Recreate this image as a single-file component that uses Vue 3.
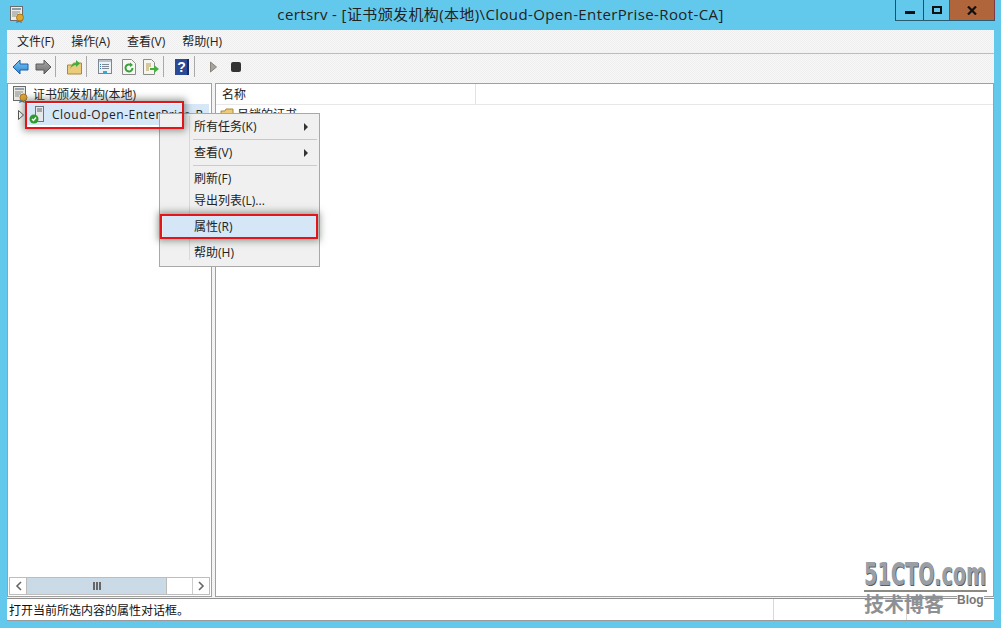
<script setup>
const menus = ['文件(F)', '操作(A)', '查看(V)', '帮助(H)']
</script>

<template>
  <div class="win">
    <header class="titlebar">
      <svg class="appicon" width="17" height="18" viewBox="0 0 17 18">
        <rect x="1.5" y=".5" width="12" height="14" fill="#ececE6" stroke="#6b6b6b" />
        <rect x="3" y="2" width="9" height="2" fill="#8d9cab" />
        <path d="M3 6h8M3 8h6M3 10h4" stroke="#8a8a8a" />
        <path d="M8 14l-1 3 3-1 3 1-1-3" fill="#3f7fb6" />
        <circle cx="11" cy="11.5" r="3.5" fill="#e2a72e" stroke="#a8741a" />
      </svg>
      <div class="title">certsrv - [证书颁发机构(本地)\Cloud-Open-EnterPrise-Root-CA]</div>
      <div class="caption">
        <div class="cbtn min"><span class="glyph-min"></span></div>
        <div class="cbtn max"><span class="glyph-max"></span></div>
        <div class="cbtn close">
          <svg width="10" height="9" viewBox="0 0 10 9"><path d="M1 .5l8 8M9 .5l-8 8" stroke="#111" stroke-width="2.2" /></svg>
        </div>
      </div>
    </header>

    <main class="client">
      <nav class="menubar">
        <span v-for="m in menus" :key="m">{{ m }}</span>
      </nav>

      <div class="toolbar">
        <svg class="tb" width="17" height="16" viewBox="0 0 17 16">
          <defs>
            <linearGradient id="bk" x1="0" y1="0" x2="0" y2="1"><stop offset="0" stop-color="#7cc6f2" /><stop offset="1" stop-color="#2a86d4" /></linearGradient>
            <linearGradient id="fw" x1="0" y1="0" x2="0" y2="1"><stop offset="0" stop-color="#a8a8a8" /><stop offset="1" stop-color="#6f6f6f" /></linearGradient>
          </defs>
          <path d="M1 8l7-7v4h8v6H8v4z" fill="url(#bk)" stroke="#1c5fa8" />
        </svg>
        <svg class="tb fwd" width="17" height="16" viewBox="0 0 17 16"><path d="M16 8L9 1v4H1v6h8v4z" fill="url(#fw)" stroke="#5a5a5a" /></svg>
        <i class="sep s-a"></i>
        <svg class="tb" width="15" height="16" viewBox="0 0 15 16">
          <path d="M.5 6h5l1-2h8v11H.5z" fill="#eccb7c" stroke="#a98a3e" />
          <path d="M3 10c1-4 3-6 6-6V1l4 3.500-4 3.500V6c-2 0-4 1-6 4z" fill="#3fae3a" />
        </svg>
        <i class="sep s-b"></i>
        <svg class="tb" width="14" height="15" viewBox="0 0 14 15">
          <rect x=".5" y=".5" width="13" height="14" fill="#eef2f5" stroke="#7c8791" />
          <rect x="1" y="1" width="12" height="2" fill="#b7c3cd" />
          <path d="M4 5.500h7M4 7.500h7M4 9.500h7" stroke="#7d8a96" />
          <path d="M2 5.500h1M2 7.500h1M2 9.500h1" stroke="#3d6fa8" />
          <rect x="5" y="12" width="4" height="2" fill="#35a7e0" />
        </svg>
        <svg class="tb g-a" width="14" height="16" viewBox="0 0 14 16">
          <path d="M.5.5h9l4 4v11H.5z" fill="#f6f6f2" stroke="#8b8b8b" />
          <path d="M10.500 9a3.500 3.500 0 1 1-1.200-2.700" fill="none" stroke="#37a238" stroke-width="2" />
          <path d="M8 3.500l3 2.500-3 2z" fill="#37a238" />
        </svg>
        <svg class="tb g-b" width="16" height="16" viewBox="0 0 16 16">
          <path d="M.5.5h8l3 3v12H.5z" fill="#f6f6ee" stroke="#8b8b8b" />
          <path d="M3 5h5M3 7h5M3 9h3M3 11h3" stroke="#b59a4e" />
          <path d="M7 9h4V6l5 4-5 4v-3H7z" fill="#45b03f" />
        </svg>
        <i class="sep s-c"></i>
        <svg class="tb" width="14" height="16" viewBox="0 0 14 16">
          <rect width="14" height="16" fill="#2a4a96" />
          <rect x="12" width="2" height="16" fill="#16296a" />
          <text x="6.500" y="13" class="q">?</text>
        </svg>
        <i class="sep s-d"></i>
        <svg class="tb" width="7" height="12" viewBox="0 0 7 12"><path d="M.5 1l6 5-6 5z" fill="#a3a3a3" stroke="#8c8576" /></svg>
        <span class="stop"></span>
      </div>

      <section class="panes">
        <aside class="tree">
          <div class="tree-body">
            <div class="node root">
              <svg class="ni" width="16" height="17" viewBox="0 0 16 17">
                <rect x=".5" y=".5" width="12" height="14" fill="#e9e9e2" stroke="#6b6b6b" />
                <rect x="2" y="2" width="9" height="2" fill="#94a3b2" />
                <path d="M2 6h8M2 8h6M2 10h4" stroke="#8a8a8a" />
                <path d="M7 14l-1 3 3-1 3 1-1-3" fill="#3f7fb6" />
                <circle cx="10.500" cy="11.500" r="3.500" fill="#e2a72e" stroke="#a8741a" />
              </svg>
              <span>证书颁发机构(本地)</span>
            </div>
            <div class="node child">
              <svg class="tri" width="6" height="10" viewBox="0 0 6 10"><path d="M.5.5l5 4.500-5 4.500z" fill="#fff" stroke="#555" /></svg>
              <div class="sel">
                <svg class="ni" width="18" height="18" viewBox="0 0 18 18">
                  <rect x="6.500" y=".5" width="8" height="15" fill="#e6e8ea" stroke="#6d7379" />
                  <path d="M8 3h5M8 5h5" stroke="#5d666e" />
                  <circle cx="5" cy="13" r="4.500" fill="#2f9a2f" />
                  <path d="M3 13l1.500 1.500L7 11.500" fill="none" stroke="#fff" stroke-width="1.400" />
                </svg>
                <span>Cloud-Open-EnterPrise-R</span>
              </div>
            </div>
          </div>
          <div class="hscroll">
            <span class="arrow"><svg width="7" height="10" viewBox="0 0 7 10"><path d="M6 1L2 5l4 4" fill="none" stroke="#666" stroke-width="1.600" /></svg></span>
            <span class="thumb"><i></i><i></i><i></i></span>
            <span class="track"></span>
            <span class="arrow"><svg width="7" height="10" viewBox="0 0 7 10"><path d="M1 1l4 4-4 4" fill="none" stroke="#666" stroke-width="1.600" /></svg></span>
          </div>
        </aside>

        <section class="list">
          <div class="listhead"><span class="col">名称</span></div>
          <div class="row">
            <svg width="14" height="12" viewBox="0 0 14 12"><path d="M1 3h4l1-2h7v10H1z" fill="#eccb7c" stroke="#a98a3e" /></svg>
            <span>吊销的证书</span>
          </div>
        </section>
      </section>

      <footer class="status">
        <span>打开当前所选内容的属性对话框。</span>
        <i class="d d1"></i><i class="d d2"></i>
      </footer>
    </main>

    <div class="ctx">
      <div class="rail"></div>
      <div class="item">所有任务(K)<b class="sub"></b></div>
      <div class="rule warm"></div>
      <div class="item">查看(V)<b class="sub"></b></div>
      <div class="rule"></div>
      <div class="item">刷新(F)</div>
      <div class="item">导出列表(L)...</div>
      <div class="gap"></div>
      <div class="item active">属性(R)</div>
      <div class="gap"></div>
      <div class="item">帮助(H)</div>
    </div>

    <div class="mark m1"></div>
    <div class="mark m2"></div>

    <div class="wm">
      <div class="wm-top">51CTO.com</div>
      <div class="wm-line"></div>
      <div class="wm-bot"><span>技术博客</span><em>Blog</em></div>
    </div>
  </div>
</template>

<style>
html, body { margin: 0; padding: 0; background: #62c9ec; }
</style>

<style scoped>
.win {
  position: relative;
  width: 1001px;
  height: 628px;
  overflow: hidden;
  background: #62c9ec;
  font-family: "Open Sans", "Noto Sans CJK SC", sans-serif;
  font-size: 12px;
  color: #1a1a1a;
  display: flex;
  flex-direction: column;
}
.titlebar { height: 30px; display: flex; position: relative; flex: none; }
.appicon { margin: 6px 0 0 9px; }
.title {
  position: absolute; left: 0; right: 0; top: 4px; text-align: center;
  font-size: 15px; line-height: 20px; color: #222; letter-spacing: .38px;
}
.caption { position: absolute; right: 6px; top: 0; display: flex; height: 20px; border-bottom: 1px solid #2d5a70; }
.cbtn { display: flex; align-items: center; justify-content: center; height: 20px; box-sizing: border-box; }
.min { width: 28px; border-left: 1px solid #2d4a58; padding-top: 5px; }
.max { width: 26px; border-left: 1px solid #2d4a58; }
.close { width: 46px; background: #b0653a; border-left: 1px solid #7a4a4a; border-right: 1px solid #7a3a4a; }
.glyph-min { width: 10px; height: 3px; background: #111; }
.glyph-max { width: 10px; height: 8px; border: 2px solid #111; box-sizing: border-box; }

.client {
  margin: 0 7px 7px 7px; flex: 1; display: flex; flex-direction: column; min-height: 0;
  background: repeating-conic-gradient(#efefef 0 25%, #f7f7f7 0 50%) 0 0 / 2px 2px;
}
.menubar {
  height: 24px; flex: none; display: flex; gap: 17px; padding: 0 0 2px 10px; align-items: center;
  border-bottom: 1px solid #c3b8bb; box-sizing: border-box; color: #222;
}
.toolbar {
  height: 29px; flex: none; display: flex; align-items: center; padding: 0 0 4px 5px; box-sizing: border-box;
}
.tb { flex: none; }
.fwd { margin-left: 6px; }
.g-a { margin-left: 10px; }
.g-b { margin-left: 7px; }
.sep { width: 1px; height: 21px; background: #a9a9a9; flex: none; }
.s-a { margin: 0 11px 0 3px; }
.s-b { margin: 0 11px 0 4px; }
.s-c { margin: 0 11px 0 4px; }
.s-d { margin: 0 15px 0 5px; }
.q { font: bold 14px "Liberation Sans", sans-serif; fill: #fff; text-anchor: middle; }
.stop { width: 10px; height: 10px; background: #333; border-radius: 2px; margin-left: 14px; }

.panes { flex: 1; display: flex; gap: 3px; min-height: 0; }
.tree {
  width: 205px; box-sizing: border-box; border: 1px solid #a0a0a0; background: #fff;
  display: flex; flex-direction: column;
}
.tree-body { flex: 1; overflow: hidden; }
.node { display: flex; align-items: center; white-space: nowrap; }
.ni { flex: none; }
.root { height: 20px; padding-left: 5px; gap: 4px; color: #222; }
.child { height: 21px; padding-left: 10px; }
.tri { margin-right: 3px; flex: none; }
.sel {
  flex: 1; min-width: 0; overflow: hidden; display: flex; align-items: center; height: 21px;
  background: #d6e7f7; padding-left: 2px; margin-right: 2px; box-sizing: border-box;
}
.sel span { margin-left: 5px; letter-spacing: .5px; color: #222; }
.hscroll { height: 18px; flex: none; margin: 0 1px 1px; display: flex; border: 1px solid #bdbdbd; box-sizing: border-box; background: #fff; }
.arrow { width: 16px; display: flex; align-items: center; justify-content: center; flex: none; background: #fff; }
.thumb {
  width: 141px; flex: none; border-left: 1px solid #bbb; border-right: 1px solid #bbb;
  background: repeating-conic-gradient(#c9d9e6 0 25%, #e2d8b8 0 50%) 0 0 / 2px 2px;
  display: flex; gap: 1px; justify-content: center; align-items: center; box-sizing: border-box;
}
.thumb i { width: 2px; height: 8px; background: #666; }
.track { flex: 1; border-right: 1px solid #ccc; }

.list { flex: 1; border: 1px solid #a0a0a0; background: #fff; min-width: 0; box-sizing: border-box; }
.listhead { height: 21px; display: flex; border-bottom: 1px solid #e8e8e8; box-sizing: border-box; }
.col { width: 260px; box-sizing: border-box; padding-left: 6px; line-height: 21px; border-right: 1px solid #e3e3e3; color: #222; }
.row { display: flex; align-items: center; gap: 3px; padding-left: 4px; height: 18px; }

.status {
  height: 23px; flex: none; background: #fff; border-top: 1px solid #8f8f8f; border-bottom: 1px solid #9a9a9a;
  box-sizing: border-box; position: relative; margin-top: 1px; display: flex; align-items: center; padding-left: 2px; color: #111;
}
.d { position: absolute; top: 0; bottom: 0; width: 1px; background: #d8d8d8; }
.d1 { left: 766px; }
.d2 { left: 899px; }

.ctx {
  position: absolute; left: 159px; top: 113px; width: 161px; height: 154px; box-sizing: border-box;
  background: #f0f0f0; border: 1px solid #a8a8a8; padding: 2px 2px 0; color: #222;
}
.rail { position: absolute; left: 29px; top: 2px; bottom: 6px; width: 1px; background: #d9d9d9; }
.item { height: 22px; line-height: 22px; padding-left: 32px; position: relative; }
.item.active { background: #d5e6f6; margin: 0 1px; padding-left: 31px; }
.rule { height: 1px; margin: 1px 0 2px 31px; background: #c4cdd6; }
.rule.warm { background: #cfc7b0; }
.gap { height: 4px; }
.sub { position: absolute; right: 9px; top: 7px; border-left: 4px solid #333; border-top: 4px solid transparent; border-bottom: 4px solid transparent; }

.mark { position: absolute; border: 2px solid #e3141a; box-shadow: 0 0 7px 2px rgba(70, 80, 70, .55); box-sizing: border-box; }
.m1 { left: 25px; top: 101px; width: 159px; height: 28px; }
.m2 { left: 160px; top: 214px; width: 158px; height: 25px; }

.wm { position: absolute; left: 864px; top: 561px; width: 130px; }
.wm-top {
  font: bold 32px/26px "DejaVu Sans Condensed", "DejaVu Sans", sans-serif;
  white-space: nowrap; color: #9a9fa6; text-shadow: 1px 1px 0 #5a5a5a;
  transform: scaleX(.67); transform-origin: left center; width: 178px; margin-bottom: 3px;
}
.wm-line { height: 2px; background: #8a8a80; width: 123px; }
.wm-bot { display: flex; position: relative; height: 24px; padding-top: 3px; }
.wm-bot span { font-size: 20px; line-height: 20px; font-weight: 700; white-space: nowrap; color: #8d9095; }
.wm-bot em { position: absolute; left: 93px; top: 2px; font: bold 12px/12px "Liberation Sans", sans-serif; color: #777; background: #fff; }
</style>
